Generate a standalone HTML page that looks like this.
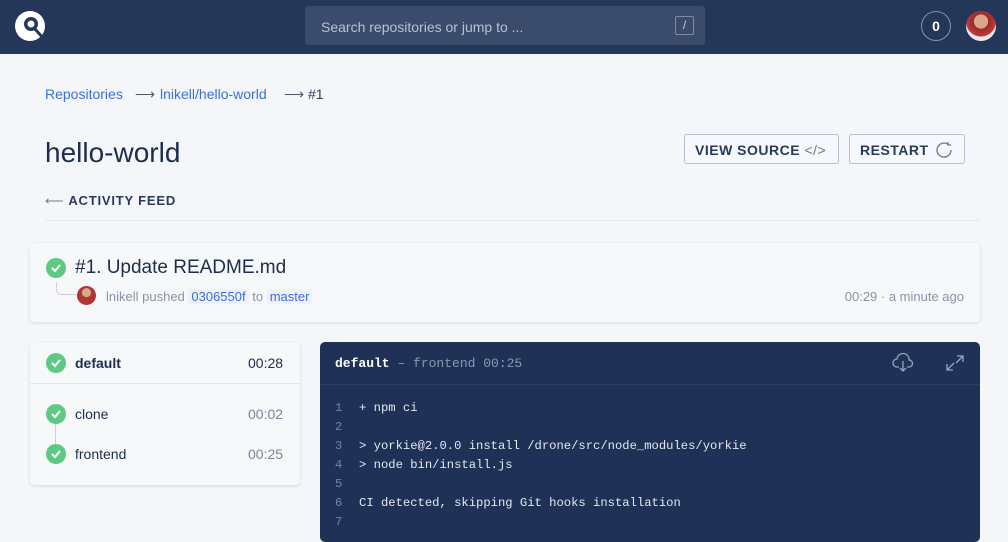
<!DOCTYPE html>
<html><head><style>
*{box-sizing:border-box;margin:0;padding:0}
body{width:1008px;height:524px;overflow:hidden;background:#f4f6f9;font-family:"Liberation Sans",sans-serif;color:#1e2d4b;position:relative}
.a{position:absolute}
.hdr{left:0;top:0;width:1008px;height:54px;background:#253759}
.search{left:305px;top:6px;width:400px;height:39px;background:#3b4b6b;border-radius:3px;color:#b8c2d3;font-size:14px;padding:13px 16px}
.slash{left:675px;top:16px;width:19px;height:19px;border:1px solid #7d8aa3;border-radius:2px;color:#c8d0dd;font-size:12px;text-align:center;line-height:17px}
.bc{top:86px;font-size:14px}
.blue{color:#3b6fd8}
.btn{top:134px;height:30px;border:1px solid #b4bfcf;border-radius:3px;font-size:14px;font-weight:bold;letter-spacing:.5px;color:#2a3a5a;padding:7px 10px;background:#f6f8fb}
.card{background:#f7f8fa;border-radius:4px;box-shadow:0 1px 3px rgba(0,0,0,.12)}
.chk{width:20px;height:20px;border-radius:50%;background:#5dc983}
.mono{font-family:"Liberation Mono",monospace}
.log div{height:19px;white-space:pre;position:relative;padding-left:24px}
.log span{position:absolute;left:0;color:#7583a0}
</style></head><body>
<div class="a hdr"></div>
<svg class="a" style="left:14px;top:10px" width="32" height="32" viewBox="0 0 32 32"><circle cx="16" cy="16" r="15" fill="#fff"/><circle cx="17" cy="14" r="7" fill="#253759"/><circle cx="17" cy="14" r="3.5" fill="#fff"/><line x1="21" y1="19" x2="29" y2="28" stroke="#253759" stroke-width="3"/></svg>
<div class="a search">Search repositories or jump to ...</div>
<div class="a slash">/</div>
<div class="a" style="left:921px;top:11px;width:30px;height:30px;border:1px solid #8592aa;border-radius:50%;color:#fff;font-weight:bold;font-size:14px;text-align:center;line-height:28px">0</div>
<div class="a" style="left:966px;top:11px;width:30px;height:30px;border-radius:50%;background:radial-gradient(circle at 50% 35%,#d9a88a 0 28%,#9a2a2a 30%,#c03a3a 60%,#e8e8e8 62%)"></div>

<div class="a bc blue" style="left:45px">Repositories</div>
<div class="a bc" style="left:135px;color:#556">⟶</div>
<div class="a bc blue" style="left:160px">lnikell/hello-world</div>
<div class="a bc" style="left:284px;color:#556">⟶</div>
<div class="a bc" style="left:308px;color:#2a3a5a">#1</div>
<div class="a" style="left:45px;top:137px;font-size:28px;color:#1e2d4b">hello-world</div>
<div class="a btn" style="left:684px;width:155px">VIEW SOURCE <span style="font-weight:normal;color:#6a7890">&lt;/&gt;</span></div>
<div class="a btn" style="left:849px;width:116px">RESTART <svg style="position:absolute;right:10px;top:5px" width="20" height="20" viewBox="0 0 20 20"><path d="M17 10a7 7 0 1 1-3-5.7M14 2v3h3" fill="none" stroke="#6a7890" stroke-width="1.3"/></svg></div>
<div class="a" style="left:45px;top:193px;font-size:13px;font-weight:bold;letter-spacing:.8px;color:#2a3a5a"><span style="font-weight:normal;color:#6a7890">⟵</span> ACTIVITY FEED</div>
<div class="a" style="left:45px;top:220px;width:935px;height:1px;background:#e6e9ee"></div>

<div class="a card" style="left:30px;top:243px;width:950px;height:79px"></div>
<div class="a chk" style="left:46px;top:258px"><svg width="20" height="20"><path d="M6 10l3 3 5-6" stroke="#fff" stroke-width="2" fill="none"/></svg></div>
<div class="a" style="left:75px;top:257px;font-size:19px">#1. Update README.md</div>
<div class="a" style="left:56px;top:282px;width:20px;height:13px;border-left:1px solid #ccd;border-bottom:1px solid #ccd;border-bottom-left-radius:5px"></div>
<div class="a" style="left:77px;top:286px;width:19px;height:19px;border-radius:50%;background:radial-gradient(circle at 50% 35%,#d9a88a 0 28%,#b03535 30%)"></div>
<div class="a" style="left:106px;top:289px;font-size:13px;color:#8a93a5">lnikell pushed <span class="blue" style="background:#eef2f8;padding:0 3px">0306550f</span> to <span class="blue" style="background:#eef2f8;padding:0 3px">master</span></div>
<div class="a" style="right:44px;top:289px;font-size:13px;color:#8a93a5">00:29 · a minute ago</div>

<div class="a card" style="left:30px;top:343px;width:270px;height:142px"></div>
<div class="a" style="left:30px;top:383px;width:270px;height:1px;background:#e4e7ec"></div>
<div class="a chk" style="left:46px;top:353px"><svg width="20" height="20"><path d="M6 10l3 3 5-6" stroke="#fff" stroke-width="2" fill="none"/></svg></div>
<div class="a" style="left:75px;top:355px;font-size:14px;font-weight:bold">default</div>
<div class="a" style="left:248px;top:355px;font-size:14px">00:28</div>
<div class="a" style="left:55px;top:414px;width:1px;height:40px;background:#ccd"></div>
<div class="a chk" style="left:46px;top:404px"><svg width="20" height="20"><path d="M6 10l3 3 5-6" stroke="#fff" stroke-width="2" fill="none"/></svg></div>
<div class="a" style="left:75px;top:406px;font-size:14px">clone</div>
<div class="a" style="left:248px;top:406px;font-size:14px;color:#7a8599">00:02</div>
<div class="a chk" style="left:46px;top:444px"><svg width="20" height="20"><path d="M6 10l3 3 5-6" stroke="#fff" stroke-width="2" fill="none"/></svg></div>
<div class="a" style="left:75px;top:446px;font-size:14px">frontend</div>
<div class="a" style="left:248px;top:446px;font-size:14px;color:#7a8599">00:25</div>

<div class="a" style="left:320px;top:342px;width:660px;height:200px;background:#1f3156;border-radius:5px"></div>
<div class="a" style="left:320px;top:384px;width:660px;height:1px;background:#2c3e62"></div>
<div class="a mono" style="left:335px;top:356px;font-size:13px;color:#8a97b0"><b style="color:#fff">default</b> – frontend 00:25</div>
<svg class="a" style="left:892px;top:352px" width="22" height="22" viewBox="0 0 22 22" fill="none" stroke="#9aa6bd" stroke-width="1.3"><path d="M7 15H5a4 4 0 0 1 0-8 6 6 0 0 1 12 1 3.5 3.5 0 0 1 0 7h-2M11 9v10M8 16l3 3 3-3"/></svg>
<svg class="a" style="left:945px;top:354px" width="20" height="18" viewBox="0 0 20 18" fill="none" stroke="#9aa6bd" stroke-width="1.3"><path d="M12 2h6v6M18 2l-7 7M8 16H2v-6M2 16l7-7"/></svg>
<div class="a mono log" style="left:335px;top:399px;font-size:12.2px;line-height:19px;color:#e4e8f0">
<div><span>1</span>+ npm ci</div>
<div><span>2</span></div>
<div><span>3</span>&gt; yorkie@2.0.0 install /drone/src/node_modules/yorkie</div>
<div><span>4</span>&gt; node bin/install.js</div>
<div><span>5</span></div>
<div><span>6</span>CI detected, skipping Git hooks installation</div>
<div><span>7</span></div>
</div>
</body></html>
